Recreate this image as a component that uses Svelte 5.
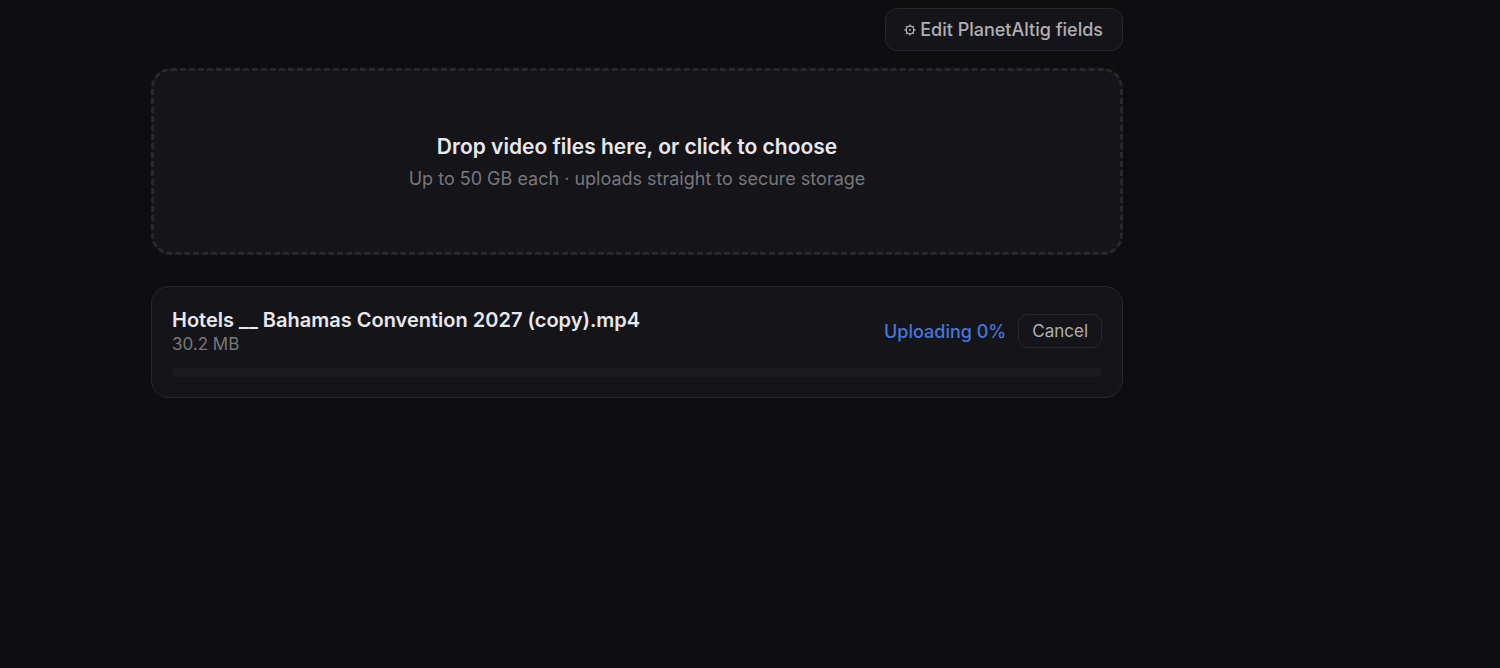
<script>
  let files = $state([
    { id: 'hotels', name: 'Hotels __ Bahamas Convention 2027 (copy).mp4', size: '30.2 MB', progress: 0 }
  ]);

  function cancel(id) {
    files = files.filter((file) => file.id !== id);
  }
</script>

<main>
  <div class="toolbar">
    <button class="edit" type="button">
      <svg viewBox="0 0 12 12" aria-hidden="true">
        <circle cx="6" cy="6" r="3.8" />
        <circle class="hub" cx="6" cy="6" r="1" />
        <path d="M6 .5v1.7M6 9.8v1.7M.5 6h1.7M9.8 6h1.7M2.1 2.1l1.2 1.2M8.7 8.7l1.2 1.2M2.1 9.9l1.2-1.2M8.7 3.3l1.2-1.2" />
      </svg>
      <span>Edit PlanetAltig fields</span>
    </button>
  </div>

  <button class="drop" type="button">
    <span class="drop-title">Drop video files here, or click to choose</span>
    <span class="drop-hint">Up to 50 GB each · uploads straight to secure storage</span>
  </button>

  {#each files as file (file.id)}
    <section class="card">
      <div class="row">
        <div class="info">
          <div class="name">{file.name}</div>
          <div class="size">{file.size}</div>
        </div>
        <span class="status">Uploading {file.progress}%</span>
        <button class="cancel" type="button" onclick={() => cancel(file.id)}>Cancel</button>
      </div>
      <div class="track" role="progressbar" aria-label={file.name} aria-valuenow={file.progress} aria-valuemin="0" aria-valuemax="100">
        <div class="fill" style="width: {file.progress}%"></div>
      </div>
    </section>
  {/each}
</main>

<style>
  :global(body) {
    margin: 0;
    background: #0e0e10;
    color: #e8e8ec;
    font-family: Inter, sans-serif;
  }

  main {
    box-sizing: border-box;
    max-width: 972px;
    margin-left: 151px;
    padding-top: 8px;
  }

  button {
    font-family: inherit;
    cursor: pointer;
  }

  .toolbar {
    display: flex;
    justify-content: flex-end;
    margin-bottom: 17px;
  }

  .edit {
    display: flex;
    align-items: center;
    gap: 4px;
    padding: 10px 19px 10px 18px;
    border: 1px solid #28282c;
    border-radius: 12px;
    background: #151519;
    color: #b0b0b4;
    font-size: 18px;
    font-weight: 500;
    line-height: 21px;
  }

  .edit svg {
    width: 12px;
    height: 12px;
    fill: none;
    stroke: currentColor;
    stroke-width: 1.3;
  }

  .edit .hub {
    fill: currentColor;
    stroke: none;
  }

  .drop {
    display: flex;
    flex-direction: column;
    align-items: center;
    gap: 4px;
    width: 100%;
    padding: 61px 24px 60px;
    border: 3px dashed #28282c;
    border-radius: 20px;
    background: #151519;
    color: inherit;
  }

  .drop-title {
    font-size: 21px;
    font-weight: 600;
    line-height: 30px;
  }

  .drop-hint {
    color: #77777b;
    font-size: 18px;
    line-height: 26px;
  }

  .card {
    margin-top: 31px;
    padding: 20px;
    border: 1px solid #28282c;
    border-radius: 18px;
    background: #151519;
  }

  .row {
    display: flex;
    align-items: center;
    gap: 12px;
  }

  .info {
    flex: 1;
    min-width: 0;
  }

  .name {
    overflow: hidden;
    font-size: 20px;
    font-weight: 600;
    line-height: 26px;
    text-overflow: ellipsis;
    white-space: nowrap;
  }

  .size {
    color: #77777b;
    font-size: 17px;
    line-height: 22px;
  }

  .status {
    color: #4477dc;
    font-size: 18px;
    font-weight: 500;
  }

  .cancel {
    padding: 6px 13px;
    border: 1px solid #28282c;
    border-radius: 10px;
    background: transparent;
    color: #b0b0b4;
    font-size: 17px;
    line-height: 20px;
  }

  .track {
    height: 9px;
    margin-top: 13px;
    overflow: hidden;
    border-radius: 5px;
    background: #1b1b1f;
  }

  .fill {
    height: 100%;
    background: #4477dc;
  }
</style>
